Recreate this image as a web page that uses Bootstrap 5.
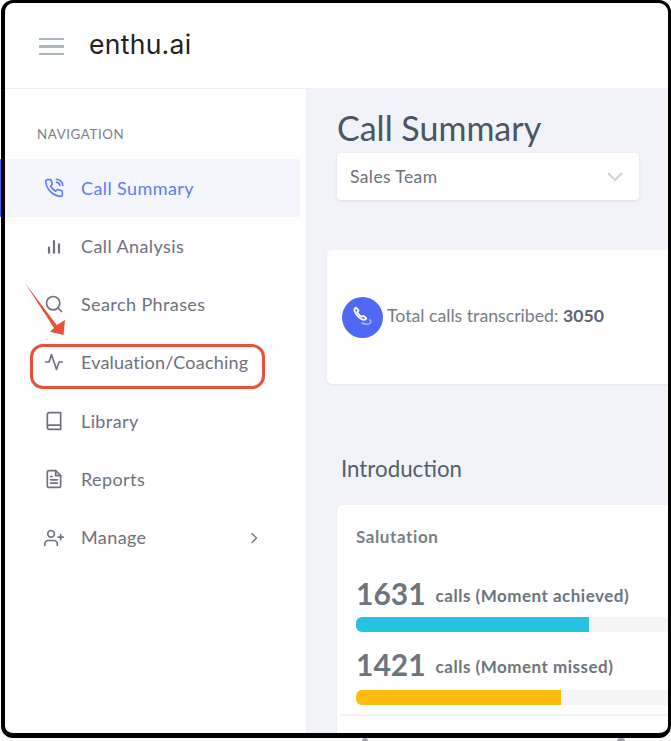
<!DOCTYPE html>
<html lang="en">
<head>
<meta charset="utf-8">
<title>enthu.ai</title>
<link href="https://cdn.jsdelivr.net/npm/bootstrap@5.3.0/dist/css/bootstrap.min.css" rel="stylesheet">
<style>
html,body{height:741px;overflow:hidden;background:#fff}
body{font-family:"Lato","Open Sans",sans-serif;color:#6c757d}
.shot{width:671px;height:741px;position:relative;overflow:hidden;background:#fff}
.clip{height:733px;overflow:hidden}
.frame{position:absolute;left:1px;top:0;width:670px;height:738px;border:solid #000;border-width:3px 3px 5px 4px;border-radius:12px;pointer-events:none;z-index:5}
.edge-mark{position:absolute;left:0;top:159px;width:1px;height:58px;background:#3f5ef0;z-index:6}
.tip{position:absolute;top:738px;height:3px;background:#a2a6ac;border-radius:4px 4px 0 0}
.tip-a{left:362px;width:6px}
.tip-b{left:617px;width:8px}
.topbar{height:89px;border-bottom:1px solid #eef0f4;padding-left:39px;padding-top:5px;gap:25px}
.brand-word{font-family:"Inter",sans-serif;font-size:26.500px;color:#222;letter-spacing:.3px;line-height:1;position:relative;top:-2px}
.burger{width:25px;gap:5px}
.burger span{display:block;height:2.500px;background:#a9b6bd}
.side{width:307px;flex:none;border-right:1px solid #eef0f4;padding-top:37px;height:644px}
.nav-cap{font-size:13.300px;letter-spacing:.6px;color:#7b8088;margin-left:37px;line-height:16px;margin-bottom:17px}
.side-item{height:58.300px;padding-left:44px;color:#6d7180;font-size:18px;letter-spacing:.4px;width:300px}
.side-item svg{width:20px;height:20px;flex:none;margin-right:17px;fill:none;stroke:currentColor;stroke-width:2;stroke-linecap:round;stroke-linejoin:round}
.side-item.on{background:#f5f6fd;color:#5f7cf6;height:58px}
.tight-word{letter-spacing:.2px;padding-bottom:1px}
.arrow-right{margin-left:auto;margin-right:40px;font-size:0}
.side-item .arrow-right svg{width:12px;height:12px;margin:0}
.side-item svg.thick-bars{stroke-width:2.600}
.side-item .arrow-right svg.chev{stroke-width:2.500}
.maincol{background:#f1f3f8;height:644px;overflow:hidden;padding-left:20px}
.page-title{font-size:34px;color:#4b5563;font-weight:400;line-height:40px;margin:19px 0 5px 10px}
.team{width:302px;height:47px;margin-left:10px;border-radius:4px;padding:0 16px 0 13px;font-size:17.500px;letter-spacing:.4px;color:#6c727a;box-shadow:0 1px 3px rgba(60,70,110,.14)}
.team span{position:relative;top:1px}
.stat{height:134px;margin-top:50px;border-radius:5px 0 0 5px;padding-left:15px;font-size:17.700px;color:#767d85;box-shadow:0 1px 2px rgba(60,70,110,.08)}
.disc{width:41px;height:41px;border-radius:50%;background:#4f68f5;margin-right:4px}
.stat-text{padding-bottom:2px}
.stat b{font-weight:700;color:#5f666e}
.sec-name{font-size:22.300px;color:#565e6e;line-height:28px;margin:71px 0 22px 14px}
.moment{margin-left:10px;border-radius:5px 0 0 0;height:300px;padding:21px 0 0 19px;box-shadow:0 1px 2px rgba(60,70,110,.08)}
.moment-name{font-size:17px;letter-spacing:.6px;font-weight:700;color:#787f86;line-height:22px;margin-bottom:27px}
.figure-row{line-height:36px;height:36px;color:#6c757d;font-weight:700}
.figure-row .num{font-size:30px;margin-right:10px}
.figure-row .lbl{font-size:17px;letter-spacing:.5px;vertical-align:3px}
.bar{height:15px;background:#f5f5f5;border-radius:6px 0 0 6px;overflow:hidden;margin:6px 0 14px}
.bar-next{margin-top:8px}
.bar div{height:100%}
.bar-a{background:#25c2e3}
.bar-b{background:#ffbc0f}
.rule{height:2px;background:#f2f3f6;margin:-5px 0 0 -15px}
.note{position:absolute;z-index:4}
.outline{left:30px;top:344px;width:235px;height:45px;border:3.500px solid #e8503a;border-radius:13px}
.pointer{left:23px;top:283px;width:44px;height:53px}
</style>
</head>
<body>
<div class="shot">
  <div class="clip">
    <header class="topbar d-flex align-items-center">
      <div class="burger d-flex flex-column"><span></span><span></span><span></span></div>
      <div class="brand-word">enthu.ai</div>
    </header>
    <div class="d-flex">
      <nav class="side">
        <div class="nav-cap">NAVIGATION</div>
        <div class="side-item on d-flex align-items-center"><svg viewBox="0 0 24 24"><path d="M15 5a5 5 0 0 1 4 4M15 1.500a8.500 8.500 0 0 1 7.500 7.500M22 17v3a2 2 0 0 1-2.200 2A19.800 19.800 0 0 1 2 4.200 2 2 0 0 1 4 2h3a2 2 0 0 1 2 1.700c.1 1 .4 1.900.7 2.800a2 2 0 0 1-.5 2.100L8 9.900a16 16 0 0 0 6 6l1.300-1.300a2 2 0 0 1 2.100-.4c.9.300 1.800.6 2.800.7A2 2 0 0 1 22 17z"/></svg>Call Summary</div>
        <div class="side-item d-flex align-items-center"><svg class="thick-bars" viewBox="0 0 24 24"><path d="M12 20V6M18 20V10M6 20v-6"/></svg>Call Analysis</div>
        <div class="side-item d-flex align-items-center"><svg viewBox="0 0 24 24"><circle cx="11" cy="11" r="8"/><path d="m21 21-4.300-4.300"/></svg>Search Phrases</div>
        <div class="side-item tight-word d-flex align-items-center"><svg viewBox="0 0 24 24"><path d="M22 12h-4l-3 9L9 3l-3 9H2"/></svg>Evaluation/Coaching</div>
        <div class="side-item d-flex align-items-center"><svg viewBox="0 0 24 24"><path d="M4 19.500A2.500 2.500 0 0 1 6.500 17H20V2H6.500A2.500 2.500 0 0 0 4 4.500v15A2.500 2.500 0 0 0 6.500 22H20v-5"/></svg>Library</div>
        <div class="side-item d-flex align-items-center"><svg viewBox="0 0 24 24"><path d="M14 2H6a2 2 0 0 0-2 2v16a2 2 0 0 0 2 2h12a2 2 0 0 0 2-2V8z"/><path d="M14 2v6h6M16 13H8M16 17H8M10 9H8"/></svg>Reports</div>
        <div class="side-item d-flex align-items-center"><svg viewBox="0 0 24 24"><path d="M16 21v-2a4 4 0 0 0-4-4H5a4 4 0 0 0-4 4v2"/><circle cx="8.500" cy="7" r="4"/><path d="M20 8v6M23 11h-6"/></svg>Manage<span class="arrow-right"><svg class="chev" viewBox="0 0 24 24"><path d="m8 3 9 9-9 9"/></svg></span></div>
      </nav>
      <main class="maincol flex-grow-1">
        <h1 class="page-title">Call Summary</h1>
        <div class="team bg-white d-flex align-items-center justify-content-between">
          <span>Sales Team</span>
          <svg width="16" height="10" viewBox="0 0 16 10" fill="none" stroke="#cfd1d4" stroke-width="2"><path d="m1 1 7 7 7-7"/></svg>
        </div>
        <section class="stat bg-white d-flex align-items-center">
          <div class="disc d-flex align-items-center justify-content-center">
            <svg width="30" height="30" viewBox="0 0 30 30" fill="none" stroke-linecap="round" stroke-linejoin="round"><path d="M8 5.500c-1.500.8-2 2.200-1.200 4 1.500 3.500 4 6.500 7.500 8 1.700.7 3.200.2 4-1.200l-3-2.500-1.700 1c-2-1-3.500-2.800-4.300-4.700l1.300-1.500z" stroke="#fff" stroke-width="1.800"/><path d="M14 21c3 1.500 6 1.500 8 .3 1.300-.8 1-2.500-.3-3.500" stroke="#aab6fb" stroke-width="1.500"/></svg>
          </div>
          <span class="stat-text">Total calls transcribed: <b>3050</b></span>
        </section>
        <div class="sec-name">Introduction</div>
        <section class="moment bg-white">
          <div class="moment-name">Salutation</div>
          <div class="figure-row"><span class="num">1631</span><span class="lbl">calls (Moment achieved)</span></div>
          <div class="bar"><div class="bar-a" style="width:233px"></div></div>
          <div class="figure-row"><span class="num">1421</span><span class="lbl">calls (Moment missed)</span></div>
          <div class="bar bar-next"><div class="bar-b" style="width:205px"></div></div>
          <div class="rule"></div>
        </section>
      </main>
    </div>
  </div>
  <div class="note outline"></div>
  <svg class="note pointer" viewBox="0 0 44 53"><path d="M2 0 L33.700 42 L42 37 L40.500 52 L27 48.700 L31 45 Z" fill="#e8503a"/></svg>
  <div class="frame"></div>
  <div class="edge-mark"></div>
  <div class="tip tip-a"></div>
  <div class="tip tip-b"></div>
</div>
</body>
</html>
